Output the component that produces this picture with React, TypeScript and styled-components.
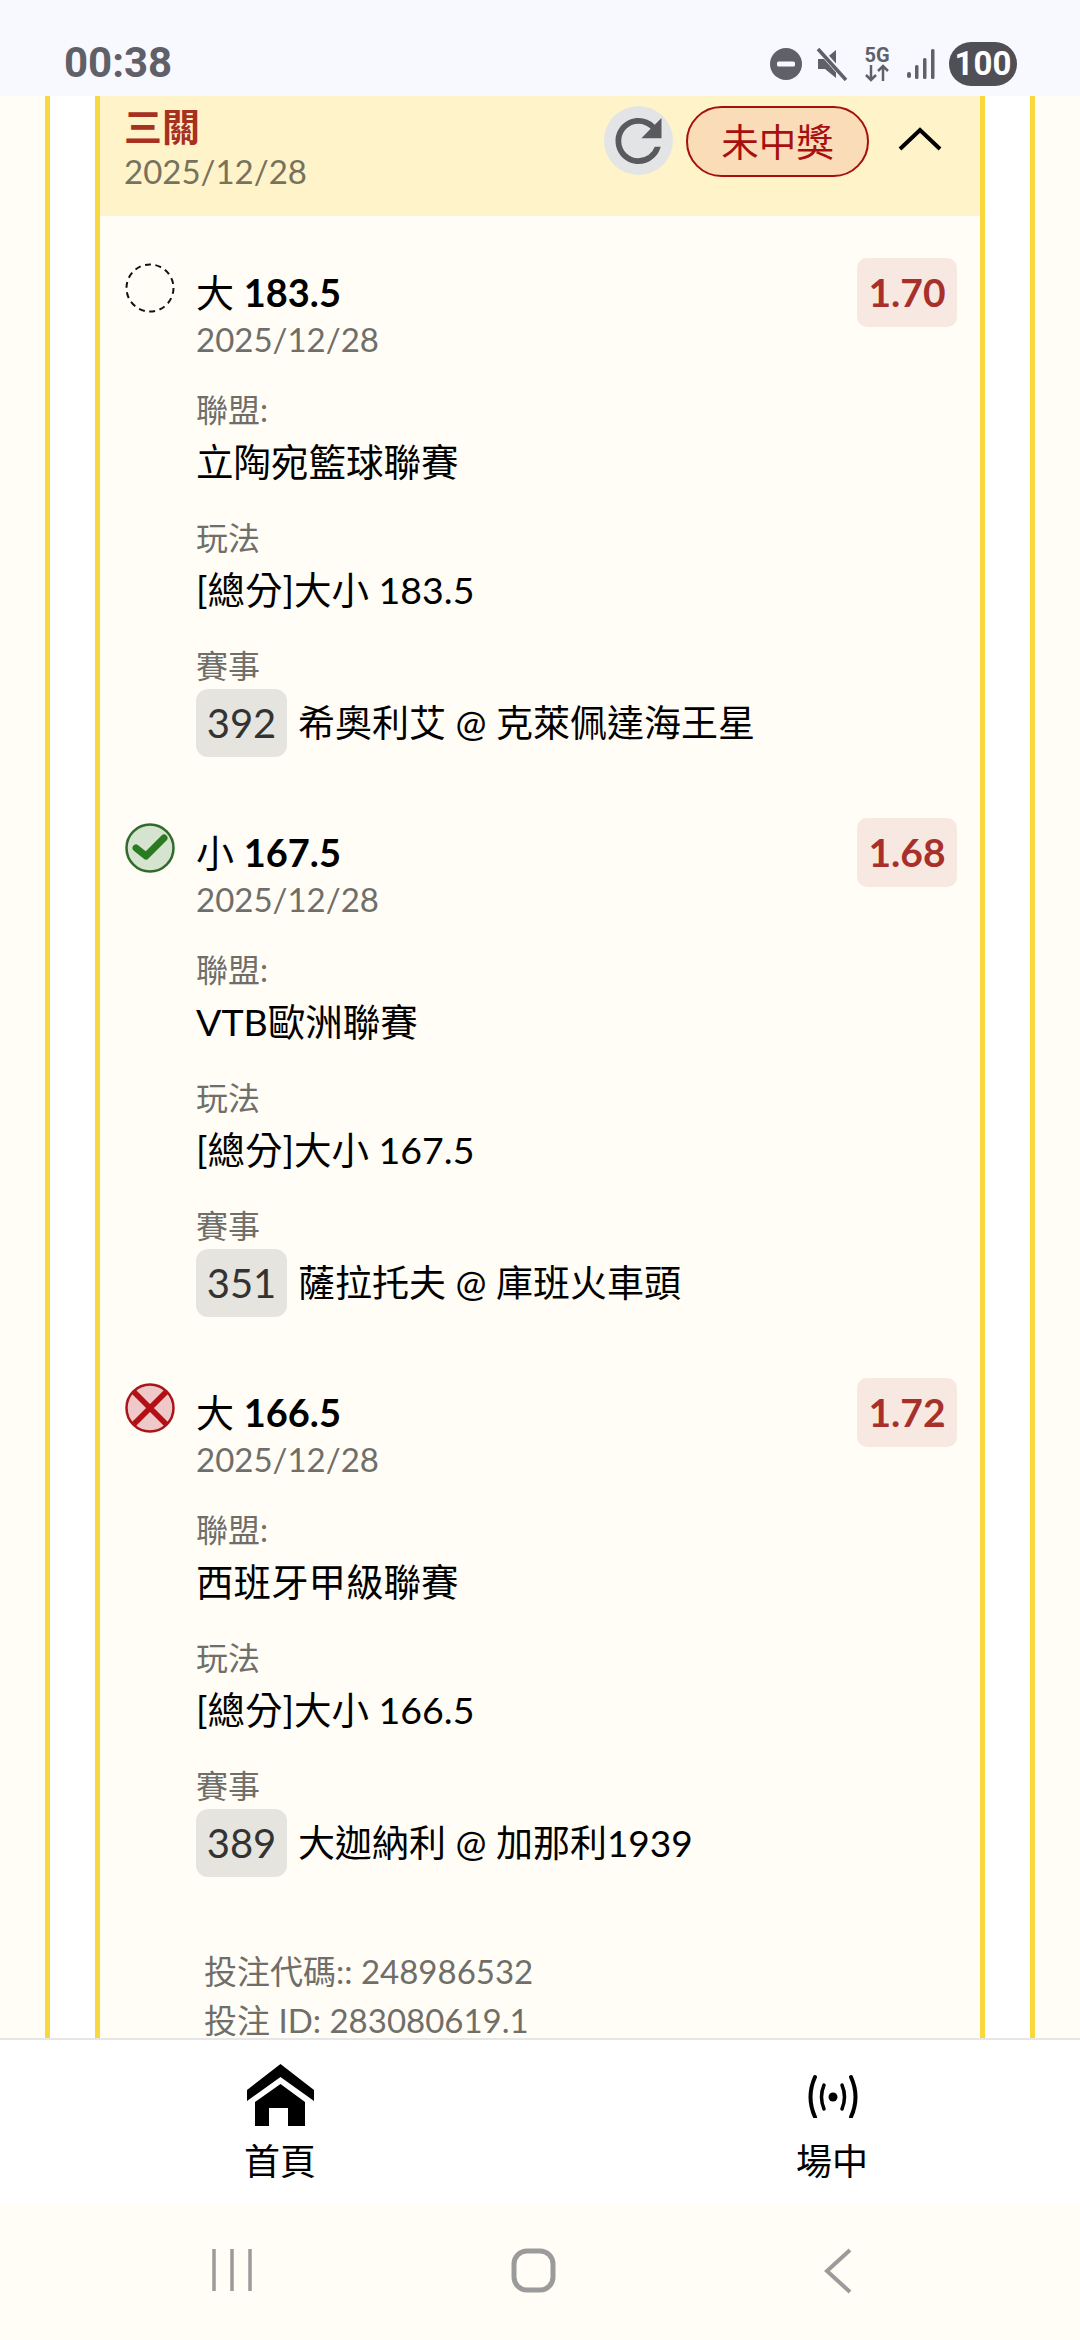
import React from 'react'
import styled, { createGlobalStyle } from 'styled-components'
import { MdRefresh } from 'react-icons/md'

const GlobalStyle = createGlobalStyle`
  * {
    box-sizing: border-box;
  }
  html,
  body {
    margin: 0;
    padding: 0;
    background: #fffdf6;
    font-family: 'Lato', 'Noto Sans CJK TC', sans-serif;
  }
`

const Page = styled.div`
  display: flex;
  flex-direction: column;
  width: 1080px;
  height: 2340px;
  overflow: hidden;
  background: #fffdf6;
`

// ======================================
// status bar

const StatusBar = styled.div`
  flex: 0 0 96px;
  display: flex;
  justify-content: space-between;
  align-items: flex-start;
  padding: 42px 63px 0 64px;
  background: #f8f8ff;
`
const Clock = styled.div`
  font-family: 'Roboto', sans-serif;
  font-weight: 700;
  font-size: 42px;
  line-height: 42px;
  color: #5f6068;
`
const StatusIcons = styled.div`
  display: flex;
  align-items: center;
  height: 44px;
`
const StatusIcon = styled.svg<{ $gap: number }>`
  display: block;
  margin-right: ${(props) => props.$gap}px;
  color: #5f6068;
`
const NetworkType = styled.div`
  display: flex;
  flex-direction: column;
  align-items: center;
  width: 26px;
  margin-right: 17px;
  color: #5f6068;
  font-family: 'Roboto', sans-serif;
  font-weight: 700;
  font-size: 20px;
  line-height: 17px;
`
const BatteryPill = styled.div`
  width: 68px;
  height: 44px;
  border-radius: 22px;
  background: #4f4f55;
  color: #fff;
  font-family: 'Roboto', sans-serif;
  font-weight: 700;
  font-size: 33px;
  line-height: 44px;
  text-align: center;
`

// ======================================
// scrolled ticket

const Scroller = styled.div`
  flex: 1;
  min-height: 0;
  overflow: hidden;
  padding: 0 45px;
`
const OuterCard = styled.div`
  min-height: 100%;
  padding: 0 45px;
  background: #fff;
  border-left: 5px solid #f8d83c;
  border-right: 5px solid #f8d83c;
`
const InnerCard = styled.div`
  background: #fffdf6;
  border-left: 5px solid #f8d83c;
  border-right: 5px solid #f8d83c;
`
const TicketHeader = styled.header`
  display: flex;
  justify-content: space-between;
  height: 120px;
  padding: 9px 38px 0 24px;
  background: #fff3c9;
`
const TicketName = styled.div`
  font-weight: 700;
  font-size: 38px;
  line-height: 42px;
  color: #a8301f;
`
const TicketDate = styled.div`
  padding-top: 1px;
  font-size: 33px;
  line-height: 46px;
  color: #77725c;
`
const HeaderActions = styled.div`
  display: flex;
  align-items: flex-start;
  padding-top: 1px;
`
const RefreshButton = styled.div`
  display: flex;
  align-items: center;
  justify-content: center;
  width: 69px;
  height: 69px;
  margin-right: 13px;
  border-radius: 50%;
  background: #e3e4e6;
  color: #5a5a5e;
`
const ResultPill = styled.div`
  width: 183px;
  height: 71px;
  margin-right: 29px;
  border: 2px solid #a50f0f;
  border-radius: 36px;
  background: #fbdcb8;
  color: #a81010;
  font-size: 37.5px;
  line-height: 67px;
  text-align: center;
`
const Chevron = styled.svg`
  display: block;
  margin-top: 21px;
`

const LegList = styled.div`
  display: flex;
  flex-direction: column;
  gap: 61px;
  padding: 42px 23px 0 25px;
`
const Leg = styled.section`
  display: flex;
  align-items: flex-start;
`
const Marker = styled.svg`
  flex: none;
  display: block;
  margin: 5px 21px 0 0;
`
const LegBody = styled.div`
  flex: 1;
  padding-top: 11px;
`
const Selection = styled.div`
  font-size: 38px;
  line-height: 46px;
  color: #000;

  & b {
    font-weight: 700;
  }
`
const LegDate = styled.div`
  font-size: 33px;
  line-height: 48px;
  color: #6f6e69;
`
const FieldLabel = styled.div`
  margin-top: 24px;
  font-size: 32px;
  line-height: 46px;
  color: #6f6e69;
`
const FieldValue = styled.div`
  font-size: 37.5px;
  line-height: 58px;
  color: #000;
`
const MatchRow = styled.div`
  display: flex;
  align-items: center;
  gap: 11px;
  font-size: 37px;
  line-height: 68px;
  color: #000;
`
const MatchCode = styled.span`
  width: 91px;
  height: 68px;
  border-radius: 12px;
  background: #e5e4df;
  color: #333;
  font-size: 40px;
  text-align: center;
`
const Odds = styled.div`
  flex: none;
  width: 100px;
  height: 69px;
  border-radius: 10px;
  background: #f7e8e2;
  color: #a8302a;
  font-weight: 700;
  font-size: 39px;
  line-height: 69px;
  text-align: center;
`
const TicketMeta = styled.div`
  padding: 70px 0 0 104px;
  font-size: 33px;
  line-height: 49px;
  color: #6f6e69;
`

// ======================================
// bottom

const TabBar = styled.nav`
  flex: 0 0 165px;
  display: flex;
  background: #fff;
  border-top: 2px solid #e6e6e6;
`
const Tab = styled.div<{ $left: number }>`
  flex: none;
  width: 140px;
  margin-left: ${(props) => props.$left}px;
  display: flex;
  flex-direction: column;
  align-items: center;
`
const TabIconSlot = styled.div`
  display: flex;
  align-items: center;
  justify-content: center;
  height: 62px;
  margin-top: 24px;
`
const TabLabel = styled.div`
  margin-top: 13px;
  font-size: 36px;
  line-height: 44px;
  color: #000;
`
const SystemNav = styled.div`
  flex: 0 0 137px;
  display: flex;
  align-items: flex-start;
  padding: 45px 0 0 212px;
  background: #fffdf6;
  color: #9b9b9b;
`
const SystemIcon = styled.svg<{ $gap: number }>`
  display: block;
  margin-right: ${(props) => props.$gap}px;
`

const DashedMarker = () => (
  <Marker width="50" height="50" viewBox="0 0 50 50">
    <circle cx="25" cy="25" r="23.5" fill="none" stroke="#111" strokeWidth="2" strokeDasharray="6 4.5" />
  </Marker>
)

const WonMarker = () => (
  <Marker width="50" height="50" viewBox="0 0 50 50">
    <circle cx="25" cy="25" r="23.5" fill="#d6e3cf" stroke="#2f6b2b" strokeWidth="2.5" />
    <path d="M11 25 L21 33 L39 15" fill="none" stroke="#2a7a1f" strokeWidth="7" strokeLinecap="round" strokeLinejoin="round" />
  </Marker>
)

const LostMarker = () => (
  <Marker width="50" height="50" viewBox="0 0 50 50">
    <circle cx="25" cy="25" r="23.5" fill="#efc9c9" stroke="#a8151a" strokeWidth="2.5" />
    <path d="M9 9 L41 41 M41 9 L9 41" fill="none" stroke="#b30f14" strokeWidth="5.5" />
  </Marker>
)

const legs = [
  {
    marker: <DashedMarker />,
    side: '大',
    line: '183.5',
    odds: '1.70',
    league: '立陶宛籃球聯賽',
    code: '392',
    match: '希奧利艾 @ 克萊佩達海王星',
  },
  {
    marker: <WonMarker />,
    side: '小',
    line: '167.5',
    odds: '1.68',
    league: 'VTB歐洲聯賽',
    code: '351',
    match: '薩拉托夫 @ 庫班火車頭',
  },
  {
    marker: <LostMarker />,
    side: '大',
    line: '166.5',
    odds: '1.72',
    league: '西班牙甲級聯賽',
    code: '389',
    match: '大迦納利 @ 加那利1939',
  },
]

const App = () => {
  return (
    <Page>
      <GlobalStyle />
      <StatusBar>
        <Clock>00:38</Clock>
        <StatusIcons>
          <StatusIcon $gap={12} width="34" height="34" viewBox="0 0 34 34">
            <circle cx="17" cy="17" r="16" fill="currentColor" />
            <rect x="8" y="14.5" width="18" height="5" rx="1.5" fill="#f8f8ff" />
          </StatusIcon>
          <StatusIcon $gap={15} width="34" height="34" viewBox="0 0 34 34">
            <path d="M3 12 H10 L21 3 V31 L10 22 H3 Z" fill="currentColor" />
            <path d="M3 1 L31 32" stroke="#f8f8ff" strokeWidth="6" />
            <path d="M3 2 L31 33" stroke="currentColor" strokeWidth="3.5" />
          </StatusIcon>
          <NetworkType>
            5G
            <svg width="26" height="18" viewBox="0 0 26 18">
              <path d="M7 1 V16 M2 11 L7 16 L12 11 M19 17 V2 M14 7 L19 2 L24 7" fill="none" stroke="currentColor" strokeWidth="2.5" />
            </svg>
          </NetworkType>
          <StatusIcon $gap={14} width="28" height="30" viewBox="0 0 28 30">
            <rect x="0" y="23" width="4" height="6" rx="2" fill="currentColor" />
            <rect x="8" y="16" width="3.5" height="14" rx="1.5" fill="currentColor" />
            <rect x="16" y="9" width="3.5" height="21" rx="1.5" fill="currentColor" />
            <rect x="24" y="0" width="3.5" height="30" rx="1.5" fill="currentColor" />
          </StatusIcon>
          <BatteryPill>100</BatteryPill>
        </StatusIcons>
      </StatusBar>

      <Scroller>
        <OuterCard>
          <InnerCard>
            <TicketHeader>
              <div>
                <TicketName>三關</TicketName>
                <TicketDate>2025/12/28</TicketDate>
              </div>
              <HeaderActions>
                <RefreshButton>
                  <MdRefresh size={70} />
                </RefreshButton>
                <ResultPill>未中獎</ResultPill>
                <Chevron width="44" height="24" viewBox="0 0 44 24">
                  <path d="M2 22 L22 3 L42 22" fill="none" stroke="#000" strokeWidth="4" />
                </Chevron>
              </HeaderActions>
            </TicketHeader>

            <LegList>
              {legs.map((leg) => (
                <Leg key={leg.code}>
                  {leg.marker}
                  <LegBody>
                    <Selection>
                      {leg.side} <b>{leg.line}</b>
                    </Selection>
                    <LegDate>2025/12/28</LegDate>
                    <FieldLabel>聯盟:</FieldLabel>
                    <FieldValue>{leg.league}</FieldValue>
                    <FieldLabel>玩法</FieldLabel>
                    <FieldValue>[總分]大小 {leg.line}</FieldValue>
                    <FieldLabel>賽事</FieldLabel>
                    <MatchRow>
                      <MatchCode>{leg.code}</MatchCode>
                      {leg.match}
                    </MatchRow>
                  </LegBody>
                  <Odds>{leg.odds}</Odds>
                </Leg>
              ))}
            </LegList>

            <TicketMeta>
              <div>投注代碼:: 248986532</div>
              <div>投注 ID: 283080619.1</div>
            </TicketMeta>
          </InnerCard>
        </OuterCard>
      </Scroller>

      <TabBar>
        <Tab $left={210}>
          <TabIconSlot>
            <svg width="67" height="62" viewBox="0 0 67 62">
              <path d="M33.5 0 L67 26 V37 L33.5 13 L0 37 V26 Z" fill="#000" />
              <path d="M33.5 20 L58 38 V62 H41 V44 H22 V62 H8 V38 Z" fill="#000" />
            </svg>
          </TabIconSlot>
          <TabLabel>首頁</TabLabel>
        </Tab>
        <Tab $left={412}>
          <TabIconSlot>
            <svg width="52" height="46" viewBox="0 0 52 46">
              <circle cx="27" cy="25" r="4.5" fill="#000" />
              <path d="M18 13 Q13 25 18 37 M36 13 Q41 25 36 37" fill="none" stroke="#000" strokeWidth="3.5" strokeLinecap="round" />
              <path d="M9 5 Q0 25 9 45 M45 5 Q54 25 45 45" fill="none" stroke="#000" strokeWidth="4" strokeLinecap="round" />
            </svg>
          </TabIconSlot>
          <TabLabel>場中</TabLabel>
        </Tab>
      </TabBar>

      <SystemNav>
        <SystemIcon $gap={259} width="40" height="44" viewBox="0 0 40 44">
          <path d="M2 1 V43 M20 1 V43 M38 1 V43" fill="none" stroke="currentColor" strokeWidth="3.5" />
        </SystemIcon>
        <SystemIcon $gap={268} width="45" height="45" viewBox="0 0 45 45">
          <rect x="3" y="3" width="39" height="39" rx="13" fill="none" stroke="currentColor" strokeWidth="5" />
        </SystemIcon>
        <SystemIcon $gap={0} width="28" height="46" viewBox="0 0 28 46">
          <path d="M26 2 L3 23 L26 44" fill="none" stroke="currentColor" strokeWidth="4" />
        </SystemIcon>
      </SystemNav>
    </Page>
  )
}

export default App
